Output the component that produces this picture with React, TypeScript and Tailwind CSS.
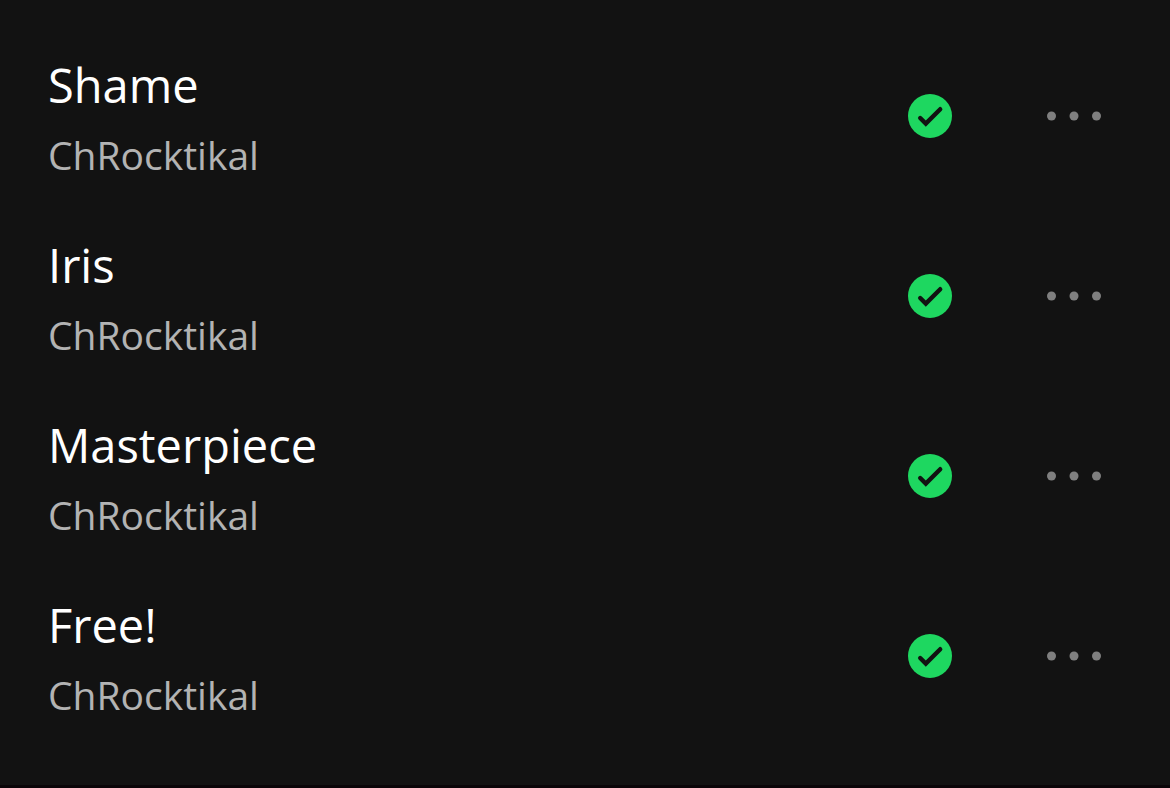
import React from 'react';

interface Track {
  title: string;
  artist: string;
}

const tracks: Track[] = [
  { title: 'Shame', artist: 'ChRocktikal' },
  { title: 'Iris', artist: 'ChRocktikal' },
  { title: 'Masterpiece', artist: 'ChRocktikal' },
  { title: 'Free!', artist: 'ChRocktikal' },
];

const TrackRow: React.FC<{ track: Track }> = ({ track }) => {
  return (
    <li className="flex h-[180px] items-center">
      <div className="min-w-0 flex-1 pt-2">
        <p className="truncate text-[47px] leading-[70px] font-medium text-white">{track.title}</p>
        <p className="truncate text-[39px] leading-[70px] text-[#b3b3b3]">{track.artist}</p>
      </div>
      <button type="button" aria-label={`Remove ${track.title} from library`} className="mr-[94px]">
        <svg className="size-11" viewBox="0 0 44 44" fill="none">
          <circle cx="22" cy="22" r="22" fill="#1ed760" />
          <path d="M12.2 24l5.6 5.6L32.2 15.2" stroke="#121212" strokeWidth="4.4" strokeLinecap="round" />
        </svg>
      </button>
      <button type="button" aria-label={`More options for ${track.title}`}>
        <svg className="h-11 w-14" viewBox="0 0 56 44" fill="#7f7f7f">
          <circle cx="5.5" cy="22" r="4.5" />
          <circle cx="28" cy="22" r="4.5" />
          <circle cx="50.5" cy="22" r="4.5" />
        </svg>
      </button>
    </li>
  );
};

const App: React.FC = () => {
  return (
    <main className="flex min-h-screen flex-col border-b-3 border-[#0a0508] bg-[#121212] font-['Open_Sans','Noto_Sans',sans-serif]">
      <ul className="pt-[26px] pr-[68px] pl-12">
        {tracks.map((track) => (
          <TrackRow key={track.title} track={track} />
        ))}
      </ul>
    </main>
  );
};

export default App;
